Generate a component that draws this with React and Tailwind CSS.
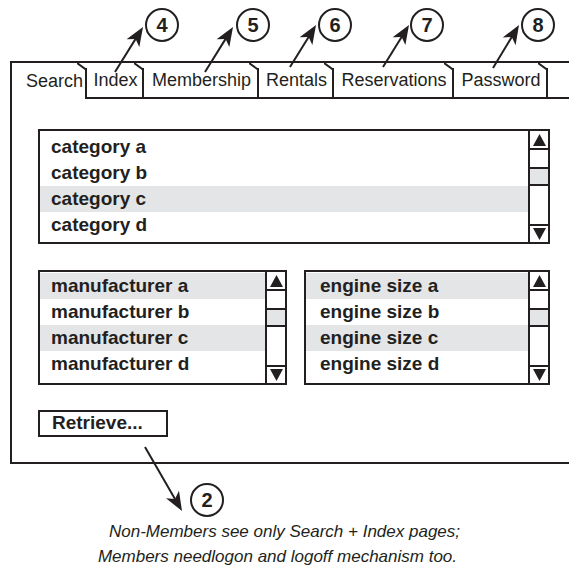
import React from "react";

const ink = "#231f20";

const Tri = ({ down }) => (
  <svg width="13" height="12" viewBox="0 0 13 12">
    <polygon points={down ? "0,0 13,0 6.5,12" : "6.5,0 13,12 0,12"} fill={ink} />
  </svg>
);

const ScrollBar = () => (
  <div className="w-[20px] flex flex-col border-l-2 border-[#231f20]">
    <div className="h-[19px] border-b-2 border-[#231f20] flex items-center justify-center">
      <Tri />
    </div>
    <div className="h-[19px] border-b-2 border-[#231f20]" />
    <div className="h-[17px] border-b-2 border-[#231f20] bg-[#e4e5e6]" />
    <div className="flex-1" />
    <div className="h-[18px] border-t-2 border-[#231f20] flex items-center justify-center">
      <Tri down />
    </div>
  </div>
);

const ListBox = ({ items, shaded, className, textPad, topPad }) => (
  <div className={`flex h-[115px] border-2 border-[#231f20] ${className}`}>
    <div className={`flex-1 flex flex-col ${topPad}`}>
      {items.map((t, i) => (
        <div
          key={t}
          className={`h-[26px] flex items-center text-[19px] font-bold ${textPad} ${
            shaded.includes(i) ? "bg-[#e4e5e6]" : ""
          }`}
        >
          {t}
        </div>
      ))}
    </div>
    <ScrollBar />
  </div>
);

const Tab = ({ label, className, active }) => (
  <div
    className={`relative h-full flex items-center text-[18px] ${
      active ? "" : "border-b-2 border-[#231f20]"
    } ${className}`}
  >
    {label}
    <div className="absolute right-0 top-[5px] bottom-0 w-[2px] bg-[#231f20]" />
    <svg className="absolute right-0 top-0" width="10" height="7" viewBox="0 0 10 7">
      <line x1="0" y1="0" x2="9" y2="6.5" stroke={ink} strokeWidth="2" />
    </svg>
  </div>
);

const Arrow = ({ x1, y1, x2, y2 }) => {
  const dx = x2 - x1;
  const dy = y2 - y1;
  const len = Math.hypot(dx, dy);
  const ux = dx / len;
  const uy = dy / len;
  const L = 19;
  const W = 7.5;
  const bx = x2 - ux * L;
  const by = y2 - uy * L;
  const pts = `${x2},${y2} ${bx - uy * W},${by + ux * W} ${bx + ux * 5},${by + uy * 5} ${bx + uy * W},${by - ux * W}`;
  return (
    <g>
      <line x1={x1} y1={y1} x2={bx + ux * 5} y2={by + uy * 5} stroke={ink} strokeWidth="2" />
      <polygon points={pts} fill={ink} />
    </g>
  );
};

const Callout = ({ n, className }) => (
  <div
    className={`absolute w-[34px] h-[34px] rounded-full border-2 border-[#231f20] bg-white flex items-center justify-center text-[20px] font-bold ${className}`}
  >
    {n}
  </div>
);

export default function App() {
  return (
    <div className="relative w-[569px] h-[571px] overflow-hidden bg-white font-['Liberation_Sans',Arial,sans-serif] text-[#231f20]">
      <div className="pt-[61px] pl-[10px]">
        <div className="w-[600px] border-2 border-[#231f20] pb-[25px]">
          <div className="flex h-[36px]">
            <Tab label="Search" active className="w-[75px] pl-[14px]" />
            <Tab label="Index" className="w-[57px] justify-center" />
            <Tab label="Membership" className="w-[115px] justify-center" />
            <Tab label="Rentals" className="w-[75px] justify-center" />
            <Tab label="Reservations" className="w-[120px] justify-center" />
            <Tab label="Password" className="w-[94px] justify-center" />
            <div className="flex-1 border-b-2 border-[#231f20]" />
          </div>
          <div className="pl-[26px]">
            <ListBox
              className="w-[512px] mt-[30px]"
              topPad="pt-[3px]"
              textPad="pl-[11px]"
              items={["category a", "category b", "category c", "category d"]}
              shaded={[2]}
            />
            <div className="flex gap-[17px] mt-[26px]">
              <ListBox
                className="w-[249px]"
                topPad="pt-[1px]"
                textPad="pl-[11px]"
                items={["manufacturer a", "manufacturer b", "manufacturer c", "manufacturer d"]}
                shaded={[0, 2]}
              />
              <ListBox
                className="w-[246px]"
                topPad="pt-[1px]"
                textPad="pl-[14px]"
                items={["engine size a", "engine size b", "engine size c", "engine size d"]}
                shaded={[0, 2]}
              />
            </div>
            <div className="mt-[25px] w-[130px] h-[27px] border-2 border-[#231f20] flex items-center pl-[12px] text-[19px] font-bold">
              Retrieve...
            </div>
          </div>
        </div>
      </div>

      <div className="mt-[55px] text-center italic text-[17px] leading-[25px]">
        <div>Non-Members see only Search + Index pages;</div>
        <div className="pr-[14px]">Members needlogon and logoff mechanism too.</div>
      </div>

      <svg className="absolute inset-0 pointer-events-none" width="569" height="571">
        <Arrow x1={115} y1={72} x2={143} y2={27} />
        <Arrow x1={205} y1={72} x2={233} y2={27} />
        <Arrow x1={290} y1={67} x2={316} y2={25} />
        <Arrow x1={383} y1={67} x2={409} y2={25} />
        <Arrow x1={493} y1={68} x2={519} y2={25} />
        <Arrow x1={145} y1={447} x2={182} y2={511} />
      </svg>

      <Callout n="4" className="left-[145px] top-[8px]" />
      <Callout n="5" className="left-[236px] top-[8px]" />
      <Callout n="6" className="left-[318px] top-[8px]" />
      <Callout n="7" className="left-[410px] top-[8px]" />
      <Callout n="8" className="left-[521px] top-[8px]" />
      <Callout n="2" className="left-[190px] top-[483px]" />
    </div>
  );
}
